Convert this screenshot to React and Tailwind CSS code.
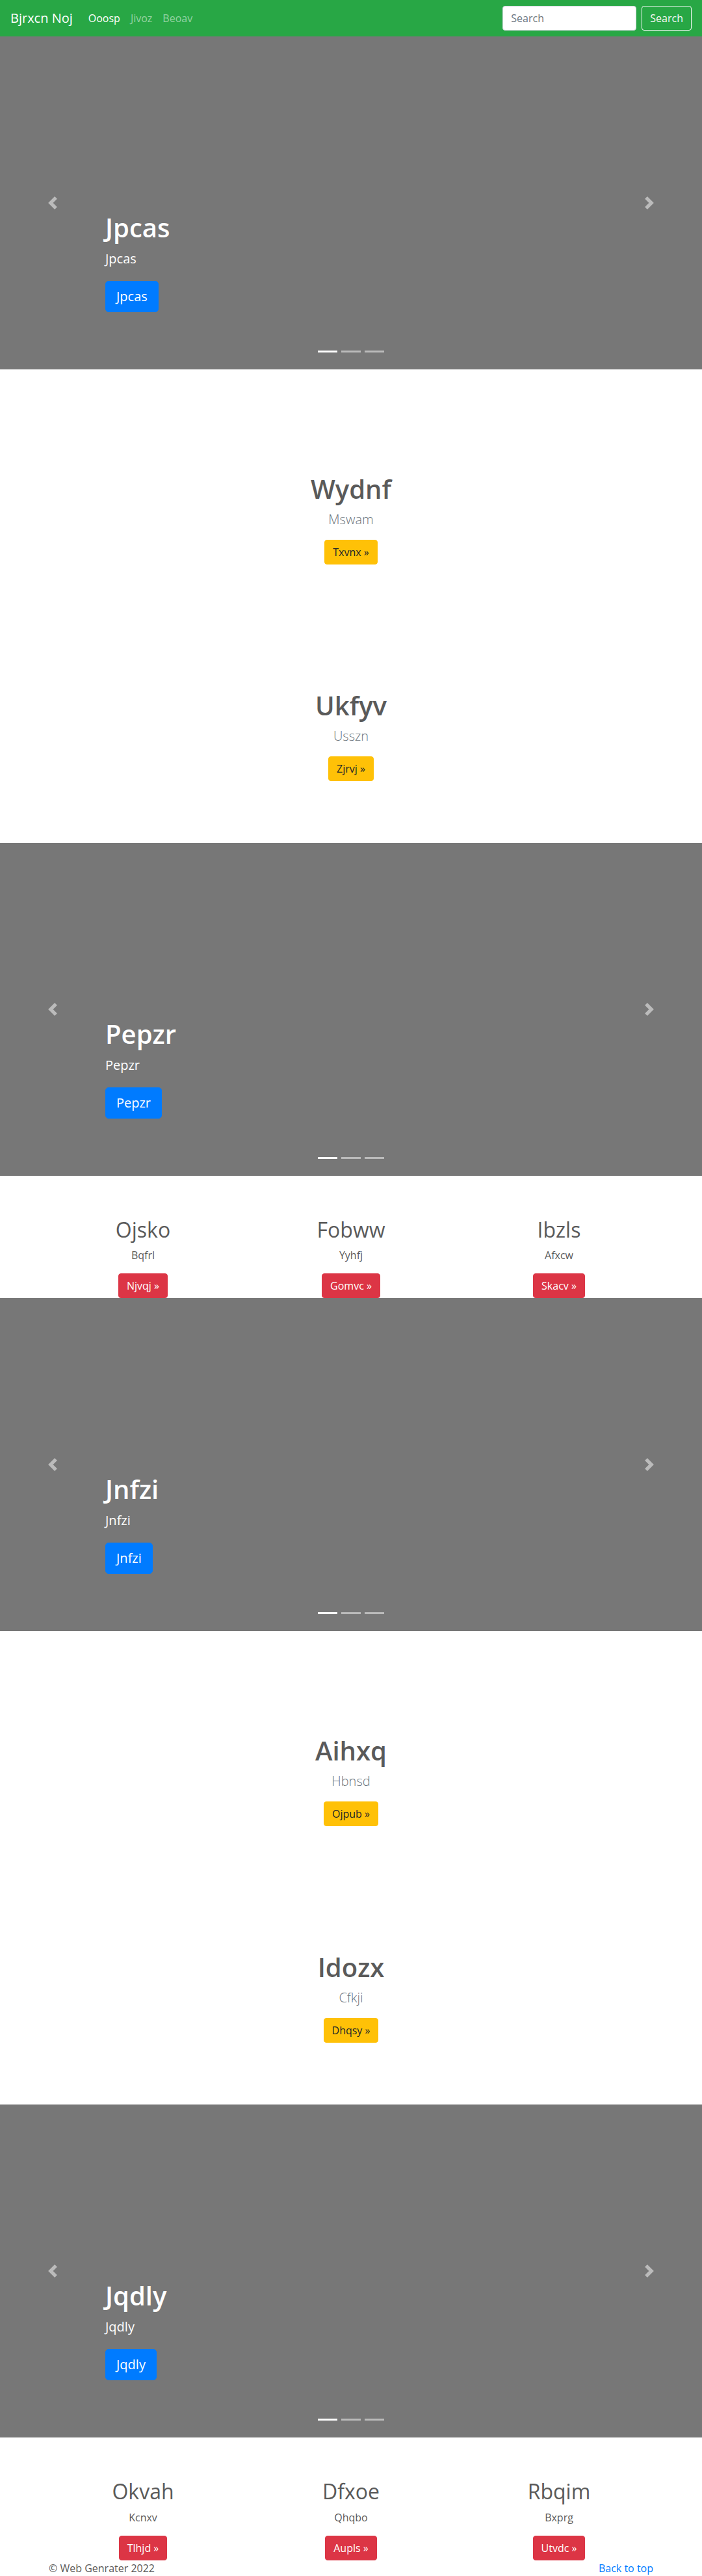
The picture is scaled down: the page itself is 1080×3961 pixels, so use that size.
import React from 'react';

const slides = ['Jpcas', 'Pepzr', 'Jnfzi', 'Jqdly'];

const featurettes = [
  [
    { title: 'Wydnf', lead: 'Mswam', cta: 'Txvnx' },
    { title: 'Ukfyv', lead: 'Usszn', cta: 'Zjrvj' },
  ],
  [
    { title: 'Aihxq', lead: 'Hbnsd', cta: 'Ojpub' },
    { title: 'Idozx', lead: 'Cfkji', cta: 'Dhqsy' },
  ],
];

const columns = [
  [
    { title: 'Ojsko', text: 'Bqfrl', cta: 'Njvqj' },
    { title: 'Fobww', text: 'Yyhfj', cta: 'Gomvc' },
    { title: 'Ibzls', text: 'Afxcw', cta: 'Skacv' },
  ],
  [
    { title: 'Okvah', text: 'Kcnxv', cta: 'Tlhjd' },
    { title: 'Dfxoe', text: 'Qhqbo', cta: 'Aupls' },
    { title: 'Rbqim', text: 'Bxprg', cta: 'Utvdc' },
  ],
];

function Navbar() {
  return (
    <nav className="h-14 bg-[#28a745] flex items-center px-4">
      <a href="#" className="text-white text-[20px] leading-[30px] mr-4">Bjrxcn Noj</a>
      <ul className="flex">
        <li><a href="#" className="block px-2 text-white">Ooosp</a></li>
        <li><a href="#" className="block px-2 text-white/50">Jivoz</a></li>
        <li><a href="#" className="block px-2 text-white/50">Beoav</a></li>
      </ul>
      <form className="ml-auto flex items-center gap-2">
        <input
          type="text"
          placeholder="Search"
          className="w-[206px] h-[38px] bg-white border border-[#ced4da] rounded px-3 text-[#495057] placeholder:text-[#6c757d] outline-none"
        />
        <button type="button" className="h-[38px] px-3 border border-[#f8f9fa] rounded text-[#f8f9fa]">
          Search
        </button>
      </form>
    </nav>
  );
}

function Carousel({ title }) {
  return (
    <div className="relative h-[512px] bg-[#777] overflow-hidden">
      <div className="h-full flex flex-col justify-end px-[162px] pb-[88px] text-white">
        <h1 className="text-[40px] leading-[48px] font-semibold mb-[10px]">{title}</h1>
        <p className="text-[20px] leading-[28px] mb-5">{title}</p>
        <div>
          <a href="#" className="inline-block bg-[#007bff] border border-[#007bff] rounded-[5px] px-4 py-2 text-[20px] leading-[30px] text-white">
            {title}
          </a>
        </div>
      </div>
      <a href="#" className="absolute inset-y-0 left-0 w-[15%] flex items-center justify-center opacity-50">
        <svg width="20" height="20" viewBox="0 0 8 8" fill="#fff">
          <path d="M5.25 0l-4 4 4 4 1.5-1.5L4.25 4l2.5-2.5L5.25 0z" />
        </svg>
      </a>
      <a href="#" className="absolute inset-y-0 right-0 w-[15%] flex items-center justify-center opacity-50">
        <svg width="20" height="20" viewBox="0 0 8 8" fill="#fff">
          <path d="M2.75 0l-1.5 1.5L3.75 4l-2.5 2.5L2.75 8l4-4-4-4z" />
        </svg>
      </a>
      <ol className="absolute left-0 right-0 bottom-[26px] flex justify-center gap-[6px]">
        <li className="w-[30px] h-[3px] bg-white" />
        <li className="w-[30px] h-[3px] bg-white/50" />
        <li className="w-[30px] h-[3px] bg-white/50" />
      </ol>
    </div>
  );
}

function Featurette({ item }) {
  return (
    <div className="text-center">
      <h2 className="text-[40px] leading-[48px] font-semibold text-[#5a5a5a] mb-2">{item.title}</h2>
      <p className="text-[20px] leading-[30px] font-light text-[#6c757d] mb-4">{item.lead}</p>
      <a href="#" className="inline-block bg-[#ffc107] border border-[#ffc107] rounded px-3 py-[6px] leading-6 text-[#212529]">
        {item.cta} »
      </a>
    </div>
  );
}

function FeaturetteSection({ items }) {
  return (
    <section className="h-[728px] pt-[160px] flex flex-col gap-[193px]">
      {items.map((it) => (
        <Featurette key={it.title} item={it} />
      ))}
    </section>
  );
}

function ColumnRow({ items }) {
  return (
    <section className="w-[960px] mx-auto pt-16 grid grid-cols-3">
      {items.map((it) => (
        <div key={it.title} className="px-[15px] text-center">
          <h2 className="text-[32px] leading-[38.4px] font-medium text-[#5a5a5a] mb-2">{it.title}</h2>
          <p className="mb-4 text-[#5a5a5a]">{it.text}</p>
          <a href="#" className="inline-block bg-[#dc3545] border border-[#dc3545] rounded px-3 py-[6px] leading-6 text-white">
            {it.cta} »
          </a>
        </div>
      ))}
    </section>
  );
}

export default function App() {
  return (
    <div className="bg-white text-[#5a5a5a] text-base leading-6 font-['Open_Sans','Noto_Sans',sans-serif]">
      <Navbar />
      <Carousel title={slides[0]} />
      <FeaturetteSection items={featurettes[0]} />
      <Carousel title={slides[1]} />
      <ColumnRow items={columns[0]} />
      <Carousel title={slides[2]} />
      <FeaturetteSection items={featurettes[1]} />
      <Carousel title={slides[3]} />
      <ColumnRow items={columns[1]} />
      <footer className="w-[930px] mx-auto flex justify-between">
        <p>© Web Genrater 2022</p>
        <p><a href="#" className="text-[#007bff]">Back to top</a></p>
      </footer>
    </div>
  );
}
